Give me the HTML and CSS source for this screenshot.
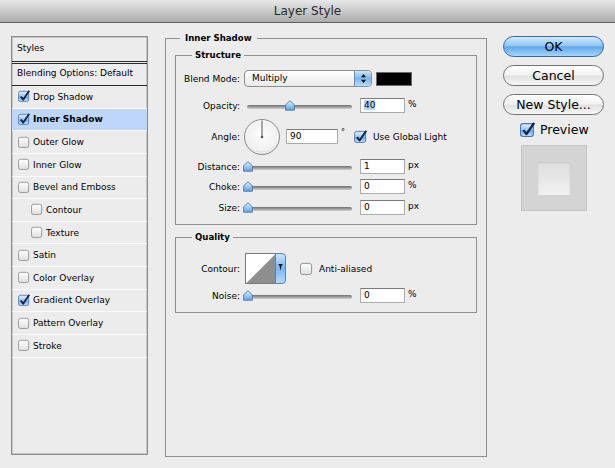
FILE: index.html
```html
<!DOCTYPE html>
<html>
<head>
    <meta charset="utf-8">
    <title>Layer Style</title>
    <link rel="stylesheet" href="styles.css">
</head>
<body>
<svg class="defs" width="0" height="0">
    <defs>
        <linearGradient id="gOn" x1="0" y1="0" x2="0" y2="1">
            <stop offset="0" stop-color="#e4f1ff"/>
            <stop offset="0.5" stop-color="#96c5f3"/>
            <stop offset="0.55" stop-color="#6da9e9"/>
            <stop offset="1" stop-color="#c2e3ff"/>
        </linearGradient>
        <linearGradient id="gOff" x1="0" y1="0" x2="0" y2="1">
            <stop offset="0" stop-color="#ffffff"/>
            <stop offset="1" stop-color="#dedede"/>
        </linearGradient>
        <linearGradient id="gThumb" x1="0" y1="0" x2="0" y2="1">
            <stop offset="0" stop-color="#e6f3ff"/>
            <stop offset="0.5" stop-color="#9dcaf4"/>
            <stop offset="1" stop-color="#5f9fe2"/>
        </linearGradient>
        <linearGradient id="gBlue" x1="0" y1="0" x2="0" y2="1">
            <stop offset="0" stop-color="#cde7fd"/>
            <stop offset="0.5" stop-color="#79b6f0"/>
            <stop offset="1" stop-color="#b4dcff"/>
        </linearGradient>
        <radialGradient id="gDial" cx="0.5" cy="0.45" r="0.55">
            <stop offset="0" stop-color="#ffffff"/>
            <stop offset="0.8" stop-color="#f0f0f0"/>
            <stop offset="1" stop-color="#cfcfcf"/>
        </radialGradient>
        <symbol id="off" viewBox="0 0 14 14">
            <rect x="0.5" y="1.5" width="12" height="12" rx="2.5" fill="url(#gOff)" stroke="#8b8b8b"/>
        </symbol>
        <symbol id="on" viewBox="0 0 14 14">
            <rect x="0.5" y="1.5" width="12" height="12" rx="2.5" fill="url(#gOn)" stroke="#4f77a6"/>
            <path d="M3.2 7.6 L6 11.3 L13.2 0.8" fill="none" stroke="#15254a" stroke-width="2.2" stroke-linejoin="round"/>
        </symbol>
        <symbol id="thumb" viewBox="0 0 11 12">
            <path d="M5.5 0.8 L10.3 5.2 L10.3 11.2 L0.7 11.2 L0.7 5.2 Z" fill="url(#gThumb)" stroke="#4f76a4" stroke-linejoin="round"/>
        </symbol>
    </defs>
</svg>

<div class="titlebar">Layer Style</div>

<div class="main">
    <div class="styles">
        <div class="hdr">Styles</div>
        <div class="blendopt">Blending Options: Default</div>
        <div class="item"><svg class="cb"><use href="#on"/></svg>Drop Shadow</div>
        <div class="item current"><svg class="cb"><use href="#on"/></svg>Inner Shadow</div>
        <div class="item"><svg class="cb"><use href="#off"/></svg>Outer Glow</div>
        <div class="item"><svg class="cb"><use href="#off"/></svg>Inner Glow</div>
        <div class="item"><svg class="cb"><use href="#off"/></svg>Bevel and Emboss</div>
        <div class="item sub"><svg class="cb"><use href="#off"/></svg>Contour</div>
        <div class="item sub"><svg class="cb"><use href="#off"/></svg>Texture</div>
        <div class="item"><svg class="cb"><use href="#off"/></svg>Satin</div>
        <div class="item"><svg class="cb"><use href="#off"/></svg>Color Overlay</div>
        <div class="item"><svg class="cb"><use href="#on"/></svg>Gradient Overlay</div>
        <div class="item"><svg class="cb"><use href="#off"/></svg>Pattern Overlay</div>
        <div class="item"><svg class="cb"><use href="#off"/></svg>Stroke</div>
    </div>

    <fieldset class="effect">
        <legend>Inner Shadow</legend>

        <fieldset class="group structure">
            <legend>Structure</legend>
            <div class="row blendrow">
                <span class="lbl">Blend Mode:</span>
                <div class="select">
                    <span class="val">Multiply</span>
                    <span class="arrows">
                        <svg width="7" height="11" viewBox="0 0 7 11">
                            <path d="M3.5 1 L6 4.3 L1 4.3 Z M3.5 10 L6 6.7 L1 6.7 Z" fill="#111"/>
                        </svg>
                    </span>
                </div>
                <div class="swatch"></div>
            </div>
            <div class="row r-opacity">
                <span class="lbl">Opacity:</span>
                <div class="slider"><div class="track"></div><svg class="thumb" style="left:calc(40% - 4px)"><use href="#thumb"/></svg></div>
                <div class="num"><span class="sel">40</span></div>
                <span class="unit">%</span>
            </div>
            <div class="row r-angle">
                <span class="lbl">Angle:</span>
                <svg class="dial" width="38" height="38" viewBox="0 0 38 38">
                    <circle cx="19" cy="19" r="17.5" fill="url(#gDial)" stroke="#8a8a8a"/>
                    <circle cx="19" cy="19" r="16.3" fill="none" stroke="#ffffff" stroke-opacity="0.7"/>
                    <line x1="19" y1="19" x2="19" y2="2.5" stroke="#555" stroke-width="1"/>
                    <circle cx="19" cy="19" r="1.3" fill="#555"/>
                </svg>
                <div class="num wide">90</div>
                <span class="deg">°</span>
                <svg class="cb big"><use href="#on"/></svg>
                <span class="cbtext">Use Global Light</span>
            </div>
            <div class="row r-distance">
                <span class="lbl">Distance:</span>
                <div class="slider"><div class="track"></div><svg class="thumb" style="left:calc(0% - 4px)"><use href="#thumb"/></svg></div>
                <div class="num">1</div>
                <span class="unit">px</span>
            </div>
            <div class="row r-choke">
                <span class="lbl">Choke:</span>
                <div class="slider"><div class="track"></div><svg class="thumb" style="left:calc(0% - 4px)"><use href="#thumb"/></svg></div>
                <div class="num">0</div>
                <span class="unit">%</span>
            </div>
            <div class="row r-size">
                <span class="lbl">Size:</span>
                <div class="slider"><div class="track"></div><svg class="thumb" style="left:calc(0% - 4px)"><use href="#thumb"/></svg></div>
                <div class="num">0</div>
                <span class="unit">px</span>
            </div>
        </fieldset>

        <fieldset class="group quality">
            <legend>Quality</legend>
            <div class="row r-contour">
                <span class="lbl">Contour:</span>
                <svg class="contour" width="41" height="31" viewBox="0 0 41 31">
                    <rect x="0.5" y="0.5" width="30" height="30" fill="#fff" stroke="#7a7a7a"/>
                    <path d="M1.5 30 L30 1.5 L30 30 Z" fill="#8e8e8e"/>
                    <path d="M30.5 0.5 L37 0.5 Q40.5 0.5 40.5 4 L40.5 27 Q40.5 30.5 37 30.5 L30.5 30.5 Z" fill="url(#gBlue)" stroke="#5b80ac"/>
                    <path d="M33.5 11 L37.5 11 L37.5 12.3 L36.6 12.3 L35.5 17.5 L34.4 12.3 L33.5 12.3 Z" fill="#111"/>
                </svg>
                <svg class="cb big aa"><use href="#off"/></svg>
                <span class="cbtext">Anti-aliased</span>
            </div>
            <div class="row r-noise">
                <span class="lbl">Noise:</span>
                <div class="slider"><div class="track"></div><svg class="thumb" style="left:calc(0% - 4px)"><use href="#thumb"/></svg></div>
                <div class="num">0</div>
                <span class="unit">%</span>
            </div>
        </fieldset>
    </fieldset>

    <div class="side">
        <div class="btn ok">OK</div>
        <div class="btn">Cancel</div>
        <div class="btn">New Style...</div>
        <div class="preview-row">
            <svg class="cb pv"><use href="#on"/></svg>
            <span>Preview</span>
        </div>
        <div class="preview">
            <div class="sample"></div>
        </div>
    </div>
</div>
</body>
</html>
```

FILE: styles.css
```css
body {
    margin: 0;
    width: 615px;
    height: 468px;
    overflow: hidden;
    background: #ececec;
    font-family: "DejaVu Sans", "Lucida Grande", sans-serif;
    font-size: 9px;
    color: #000;
}

.defs {
    position: absolute;
    width: 0;
    height: 0;
}

.titlebar {
    height: 22px;
    line-height: 23px;
    border-bottom: 1px solid #5f5f5f;
    background: linear-gradient(#e8e8e8, #ababab);
    text-align: center;
    font-size: 12px;
    color: #2a2a2a;
}

.main {
    display: flex;
    align-items: flex-start;
    padding-left: 11px;
}

/* left list */
.styles {
    flex: none;
    margin-top: 13px;
    width: 137px;
    height: 419px;
    box-sizing: border-box;
    border: 1px solid #8c8c8c;
    box-shadow: inset 1px 1px 0 #c6c6c6, inset -1px -1px 0 #c6c6c6;
}

.hdr {
    height: 24px;
    line-height: 23px;
    padding-left: 5px;
    border-bottom: 3px double #2a2a2a;
}

.blendopt {
    height: 21px;
    line-height: 19px;
    padding-left: 5px;
    border-bottom: 1px solid #2a2a2a;
}

.item {
    display: flex;
    align-items: center;
    height: 22.64px;
    box-sizing: border-box;
    padding-left: 6px;
    border-bottom: 1px solid #fbfbfb;
}

.item.sub {
    padding-left: 19px;
}

.item.current {
    background: #bdd6f9;
    font-weight: bold;
}

.cb {
    flex: none;
    width: 12px;
    height: 12px;
    margin-right: 3px;
    margin-top: -1px;
}

/* middle panel */
.effect {
    flex: none;
    margin: 9px 0 0 17px;
    padding: 5px 9px 0;
    width: 322px;
    height: 425px;
    box-sizing: border-box;
    border: 1px solid #8f8f8f;
    min-width: 0;
}

.effect legend,
.group legend {
    font-weight: bold;
    font-size: 8.6px;
    line-height: 12px;
}

.effect > legend {
    margin-left: 5px;
    padding: 0 5px;
}

.group {
    margin: 0;
    padding: 9px 0;
    border: 1px solid #8f8f8f;
    min-width: 0;
}

.group legend {
    margin-left: 16px;
    padding: 0 3px;
}

.quality {
    margin-top: 6px;
    padding-top: 10px;
}

.row {
    display: flex;
    align-items: center;
    height: 15px;
}

.lbl {
    flex: none;
    width: 64px;
    text-align: right;
}

.blendrow { height: 17px; }
.r-opacity { margin-top: 11px; }
.r-angle { height: 37px; margin-top: 5px; }
.r-distance { margin-top: 4px; }
.r-choke { margin-top: 5px; }
.r-size { margin-top: 6px; }
.r-contour { height: 31px; }
.r-noise { margin-top: 4px; }

.select {
    display: flex;
    margin-left: 4px;
    width: 128px;
    height: 17px;
    box-sizing: border-box;
    border: 1px solid #8e8e8e;
    border-radius: 4px;
    background: linear-gradient(#ffffff, #e9e9e9);
    overflow: hidden;
}

.select .val {
    flex: 1;
    padding-left: 7px;
    line-height: 15px;
}

.select .arrows {
    display: flex;
    align-items: center;
    justify-content: center;
    width: 16px;
    border-left: 1px solid #6b8fb8;
    background: linear-gradient(#cde7fd, #7ab6ef 50%, #b4dcff);
}

.swatch {
    margin-left: 4px;
    width: 36px;
    height: 14px;
    box-sizing: border-box;
    background: #000;
    border: 1px solid #6a6a6a;
}

.slider {
    position: relative;
    flex: none;
    margin-left: 7px;
    width: 105px;
    height: 12px;
}

.track {
    position: absolute;
    left: 0;
    right: 0;
    top: 5px;
    height: 4px;
    border-radius: 3px;
    background: linear-gradient(#6e6e6e, #a8a8a8 60%, #d2d2d2);
}

.thumb {
    position: absolute;
    top: 0;
    width: 10px;
    height: 11px;
}

.num {
    flex: none;
    margin-left: 8px;
    width: 45px;
    height: 15px;
    box-sizing: border-box;
    padding-left: 3px;
    line-height: 13px;
    background: #fff;
    border: 1px solid #acacac;
    border-top-color: #7b7b7b;
}

.num .sel {
    background: #b4d4fc;
}

.num.wide {
    margin-left: 5px;
    width: 52px;
}

.unit {
    margin-left: 3px;
    margin-bottom: 4px;
}

.deg {
    margin-left: 3px;
    margin-bottom: 8px;
    font-size: 8px;
}

.dial {
    flex: none;
    margin-left: 3px;
}

.cb.big {
    width: 13px;
    height: 13px;
    margin: 0 6px 0 9px;
}

.contour {
    flex: none;
    margin-left: 5px;
}

.cb.aa {
    margin-left: 14px;
}

/* right column */
.side {
    flex: none;
    margin: 13px 0 0 16px;
    width: 101px;
}

.btn {
    height: 21px;
    margin-bottom: 8px;
    box-sizing: border-box;
    border: 1px solid #737373;
    border-radius: 11px;
    background: linear-gradient(#ffffff, #f3f3f3 45%, #e2e2e2 55%, #f6f6f6);
    text-align: center;
    font-size: 12.5px;
    line-height: 19px;
}

.btn.ok {
    border-color: #35689f;
    background: linear-gradient(#d2e9fd, #92c6f3 45%, #63a6ea 52%, #a4d6ff);
}

.preview-row {
    display: flex;
    align-items: center;
    margin-top: -1px;
    height: 15px;
    font-size: 12.5px;
}

.cb.pv {
    width: 15px;
    height: 15px;
    margin: 0 5px 0 17px;
}

.preview {
    display: flex;
    align-items: center;
    justify-content: center;
    margin: 8px 0 0 18px;
    width: 66px;
    height: 66px;
    box-sizing: border-box;
    background: #d4d4d4;
    border: 1px solid #c4c4c4;
}

.sample {
    width: 32px;
    height: 33px;
    background: linear-gradient(#dedede, #f1f1f1);
    box-shadow: inset 0 1px 2px rgba(0, 0, 0, 0.12);
}
```
